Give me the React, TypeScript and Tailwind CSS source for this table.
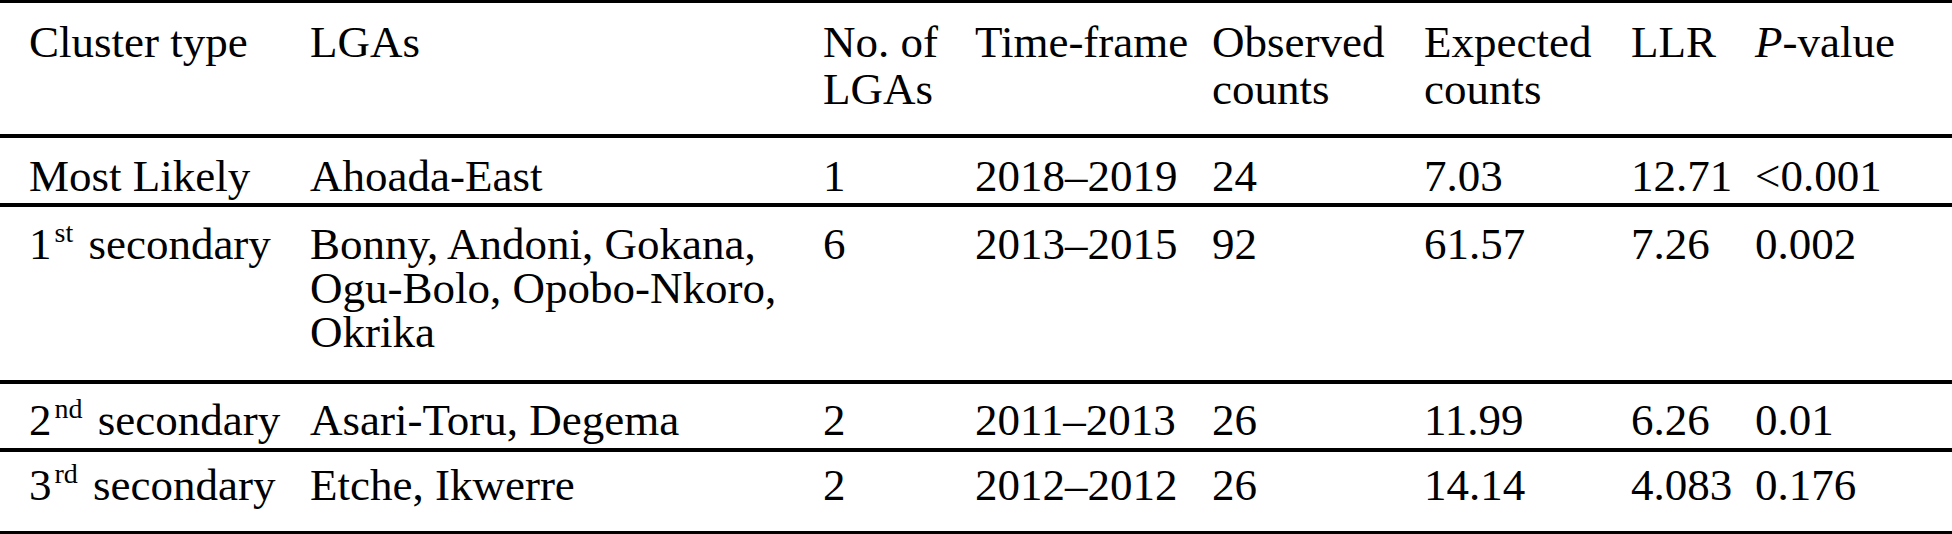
import React from "react";

const cols =
  "grid grid-cols-[281px_513px_152px_237px_212px_207px_124px_1fr] pl-[29px]";

function Ord({ n, s }: { n: string; s: string }) {
  return (
    <>
      {n}
      <sup className="text-[28px] top-[-0.6em] ml-[3px] mr-[4px]">{s}</sup> secondary
    </>
  );
}

export default function App() {
  return (
    <div className="w-[1952px] h-[534px] bg-white text-black [font-family:'Liberation_Serif','Times_New_Roman',serif] text-[45px] leading-[48px]">
      {/* header */}
      <div className={`${cols} h-[138px] border-t-[3px] border-b-4 border-black pt-[16px] leading-[47px]`}>
        <div>Cluster type</div>
        <div>LGAs</div>
        <div>
          No. of
          <br />
          LGAs
        </div>
        <div>Time-frame</div>
        <div>
          Observed
          <br />
          counts
        </div>
        <div>
          Expected
          <br />
          counts
        </div>
        <div>LLR</div>
        <div>
          <i>P</i>-value
        </div>
      </div>

      {/* row 1 */}
      <div className={`${cols} h-[69px] border-b-4 border-black pt-[14px]`}>
        <div>Most Likely</div>
        <div>Ahoada-East</div>
        <div>1</div>
        <div>2018–2019</div>
        <div>24</div>
        <div>7.03</div>
        <div>12.71</div>
        <div>&lt;0.001</div>
      </div>

      {/* row 2 */}
      <div className={`${cols} h-[177px] border-b-4 border-black pt-[15px] leading-[44px]`}>
        <div className="whitespace-nowrap">
          <Ord n="1" s="st" />
        </div>
        <div>
          Bonny, Andoni, Gokana,
          <br />
          Ogu-Bolo, Opobo-Nkoro,
          <br />
          Okrika
        </div>
        <div>6</div>
        <div>2013–2015</div>
        <div>92</div>
        <div>61.57</div>
        <div>7.26</div>
        <div>0.002</div>
      </div>

      {/* row 3 */}
      <div className={`${cols} h-[68px] border-b-4 border-black pt-[12px]`}>
        <div className="whitespace-nowrap">
          <Ord n="2" s="nd" />
        </div>
        <div>Asari-Toru, Degema</div>
        <div>2</div>
        <div>2011–2013</div>
        <div>26</div>
        <div>11.99</div>
        <div>6.26</div>
        <div>0.01</div>
      </div>

      {/* row 4 */}
      <div className={`${cols} h-[82px] border-b-[3px] border-black pt-[9px]`}>
        <div className="whitespace-nowrap">
          <Ord n="3" s="rd" />
        </div>
        <div>Etche, Ikwerre</div>
        <div>2</div>
        <div>2012–2012</div>
        <div>26</div>
        <div>14.14</div>
        <div>4.083</div>
        <div>0.176</div>
      </div>
    </div>
  );
}
